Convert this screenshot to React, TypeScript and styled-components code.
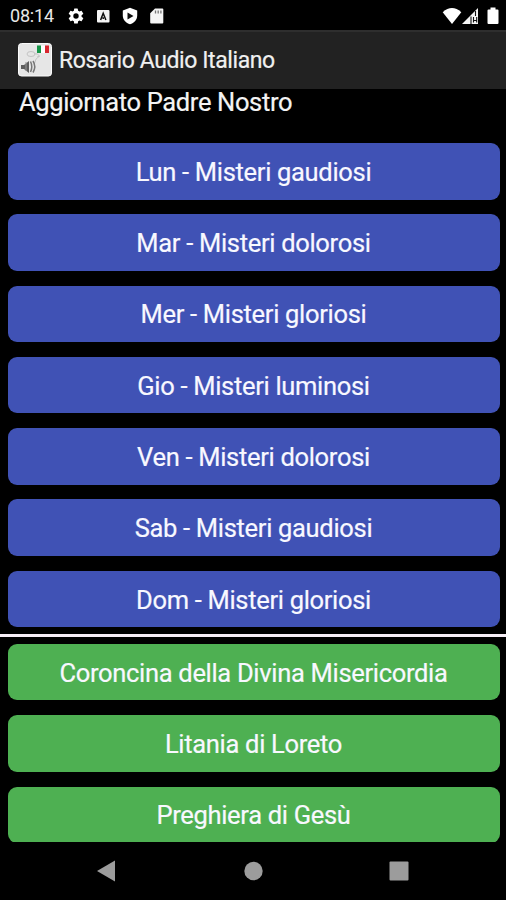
import React from 'react';
import styled, { createGlobalStyle } from 'styled-components';

const GlobalStyle = createGlobalStyle`
  * { box-sizing: border-box; }
  body { margin: 0; background: #000; font-family: Roboto, sans-serif; }
`;

const Screen = styled.div`
  width: 506px;
  height: 900px;
  background: #000;
  color: #f4f4f4;
  display: flex;
  flex-direction: column;
  overflow: hidden;
`;

const StatusBar = styled.header`
  height: 30px;
  flex: none;
  display: flex;
  align-items: center;
  padding: 2px 7px 0 10px;
`;

const Clock = styled.time`
  width: 57px;
  font-size: 18px;
  letter-spacing: -0.2px;
  line-height: 28px;
  color: #e8e8e8;
`;

const StatusGroup = styled.div<{ $end?: boolean }>`
  display: flex;
  align-items: center;
  gap: ${(p) => (p.$end ? 0 : '9px')};
  margin-left: ${(p) => (p.$end ? 'auto' : 0)};
  svg { display: block; }
`;

const AppBar = styled.div`
  height: 59px;
  flex: none;
  display: flex;
  align-items: center;
  gap: 7px;
  padding: 0 0 1px 18px;
  background: #222;
  border-top: 2px solid #2e2e2e;
`;

const Title = styled.h1`
  margin: 0;
  padding-top: 2px;
  font-size: 23px;
  letter-spacing: -0.4px;
  font-weight: 400;
  line-height: 30px;
  white-space: nowrap;
  color: #f0f0f0;
  -webkit-text-stroke: 0.2px #f0f0f0;
`;

const Content = styled.main`
  height: 753.3px;
  flex: none;
  overflow: hidden;
`;

const Notice = styled.p`
  margin: 0;
  height: 54px;
  padding-left: 19px;
  font-size: 25.5px;
  letter-spacing: -0.35px;
  line-height: 26px;
  white-space: nowrap;
  -webkit-text-stroke: 0.2px #f4f4f4;
`;

const ButtonList = styled.div`
  display: grid;
  grid-auto-rows: 56.5px;
  gap: 14.8px;
  padding: 0 6.5px 0 7.5px;
`;

const PrayerButton = styled.button<{ $tone: 'blue' | 'green' }>`
  border: 0;
  border-radius: 9px;
  padding: 1px 0 0;
  background: ${(p) => (p.$tone === 'blue' ? '#4052b5' : '#4eb052')};
  color: #f8f8ff;
  font: 400 25.5px/30px Roboto, sans-serif;
  letter-spacing: -0.31px;
  white-space: nowrap;
  -webkit-text-stroke: 0.2px #f8f8ff;
`;

const Divider = styled.hr`
  height: 3.4px;
  margin: 6.3px 0 7px;
  border: 0;
  background: #f6eef6;
`;

const NavBar = styled.nav`
  flex: 1;
  display: flex;
  justify-content: space-between;
  align-items: flex-start;
  padding: 18px 97px 0 96px;
  svg { display: block; }
`;

const mysteries = [
  'Lun - Misteri gaudiosi',
  'Mar - Misteri dolorosi',
  'Mer - Misteri gloriosi',
  'Gio - Misteri luminosi',
  'Ven - Misteri dolorosi',
  'Sab - Misteri gaudiosi',
  'Dom - Misteri gloriosi',
];
const prayers = ['Coroncina della Divina Misericordia', 'Litania di Loreto', 'Preghiera di Gesù'];

const GearIcon = () => (
  <svg width="18" height="18" viewBox="0 0 24 24" fill="#fff">
    <path fillRule="evenodd" d="M19.4 13a7.8 7.8 0 0 0 0-2l2.1-1.6a.5.5 0 0 0 .1-.7l-2-3.4a.5.5 0 0 0-.6-.2l-2.5 1a7.6 7.6 0 0 0-1.7-1l-.4-2.6a.5.5 0 0 0-.5-.5h-4a.5.5 0 0 0-.4.5L9.2 5.1a8 8 0 0 0-1.7 1L5 5.1a.5.5 0 0 0-.6.2l-2 3.4a.5.5 0 0 0 .1.7L4.6 11a8 8 0 0 0 0 2l-2.1 1.6a.5.5 0 0 0-.1.7l2 3.4c.1.2.4.3.6.2l2.5-1a7.6 7.6 0 0 0 1.7 1l.3 2.6c0 .3.2.5.4.5h4c.3 0 .5-.2.5-.5l.4-2.6a8 8 0 0 0 1.7-1l2.5 1c.2.1.5 0 .6-.2l2-3.4a.5.5 0 0 0-.1-.7zM12 15.6a3.6 3.6 0 1 1 0-7.2 3.6 3.6 0 0 1 0 7.2z" />
  </svg>
);

const BadgeIcon = () => (
  <svg width="18" height="18" viewBox="0 0 18 18">
    <rect x="3" y="3" width="12.5" height="12.5" rx="1" fill="#f5f5f5" />
    <path d="M6.6 13 9.2 6.3 11.9 13M9.2 10.3v1.6" fill="none" stroke="#111" strokeWidth="1.5" />
  </svg>
);

const ShieldIcon = () => (
  <svg width="18" height="18" viewBox="0 0 18 18">
    <path d="M9 .8 16.2 3.4v5c0 4.2-3 7.3-7.2 8.8-4.2-1.5-7.2-4.6-7.2-8.8v-5z" fill="#fff" />
    <path d="M6.5 5.5 12.5 9l-6 3.5z" fill="#111" />
  </svg>
);

const SdIcon = () => (
  <svg width="18" height="18" viewBox="0 0 18 18">
    <path d="M7 1.500h7.300a1 1 0 0 1 1 1v13a1 1 0 0 1-1 1H3.200a1 1 0 0 1-1-1V6.300z" fill="#f5f5f5" />
    <path d="M7.5 3.500v3M10.200 3.500v3M12.900 3.500v3" stroke="#777" strokeWidth="1.3" />
  </svg>
);

const WifiIcon = () => (
  <svg width="20" height="18" viewBox="0 0 20 18">
    <path d="M.7 5.2Q10-3 19.3 5.200L10 17z" fill="#fff" />
  </svg>
);

const SignalIcon = () => (
  <svg width="17" height="18" viewBox="0 0 17 18">
    <path d="M0 17 16 1v16z" fill="#f5f5f5" />
    <path d="M9 17V9.500M13.500 4v5M11.500 13.500h3M11.500 10v5.500M14.700 10v5.500" fill="none" stroke="#111" strokeWidth="1.1" />
  </svg>
);

const BatteryIcon = () => (
  <svg width="20" height="18" viewBox="0 0 20 18">
    <path d="M11.5.5h5v2h2a1 1 0 0 1 1 1V16a1 1 0 0 1-1 1h-9a1 1 0 0 1-1-1V3.500a1 1 0 0 1 1-1h2z" fill="#fff" />
  </svg>
);

const AppIcon = () => (
  <svg width="34" height="34" viewBox="0 0 34 34">
    <rect x=".5" y=".5" width="33" height="32.5" rx="3" fill="#e6e6e6" stroke="#fafafa" />
    <path d="M19 2.500h4v7.500h-4z" fill="#159447" />
    <path d="M23 2.500h4v7.500h-4z" fill="#fff" />
    <path d="M27 2.500h4v7.500h-4z" fill="#d8262e" />
    <g fill="none" stroke="#c4c4c4" strokeWidth="1">
      <ellipse cx="13" cy="11" rx="4" ry="2.5" />
      <path d="M16 11c6-1 6 3 2 5l-2 6M19 14l3-1" />
    </g>
    <path d="M3 22h3l5-4v12l-5-4H3z" fill="#5c5c5c" />
    <path d="M8 19v9" stroke="#999" strokeWidth="1" />
    <path d="M12.500 18.500q2.500 5 0 10.500M15 18q3.500 5.500 0 11.500" fill="none" stroke="#777" strokeWidth="1.5" />
  </svg>
);

export default function App() {
  return (
    <Screen>
      <GlobalStyle />
      <StatusBar>
        <Clock>08:14</Clock>
        <StatusGroup>
          <GearIcon />
          <BadgeIcon />
          <ShieldIcon />
          <SdIcon />
        </StatusGroup>
        <StatusGroup $end>
          <WifiIcon />
          <SignalIcon />
          <BatteryIcon />
        </StatusGroup>
      </StatusBar>
      <AppBar>
        <AppIcon />
        <Title>Rosario Audio Italiano</Title>
      </AppBar>
      <Content>
        <Notice>Aggiornato Padre Nostro</Notice>
        <ButtonList>
          {mysteries.map((label) => (
            <PrayerButton key={label} $tone="blue">{label}</PrayerButton>
          ))}
        </ButtonList>
        <Divider />
        <ButtonList>
          {prayers.map((label) => (
            <PrayerButton key={label} $tone="green">{label}</PrayerButton>
          ))}
        </ButtonList>
      </Content>
      <NavBar>
        <svg width="20" height="22" viewBox="0 0 20 22"><path d="M1 11 19 .5v21z" fill="#9c9c9c" /></svg>
        <svg width="20" height="22" viewBox="0 0 20 22"><circle cx="10.5" cy="11" r="9.2" fill="#9c9c9c" /></svg>
        <svg width="20" height="22" viewBox="0 0 20 22"><rect x=".5" y="1.5" width="19" height="19" rx="1" fill="#9c9c9c" /></svg>
      </NavBar>
    </Screen>
  );
}
